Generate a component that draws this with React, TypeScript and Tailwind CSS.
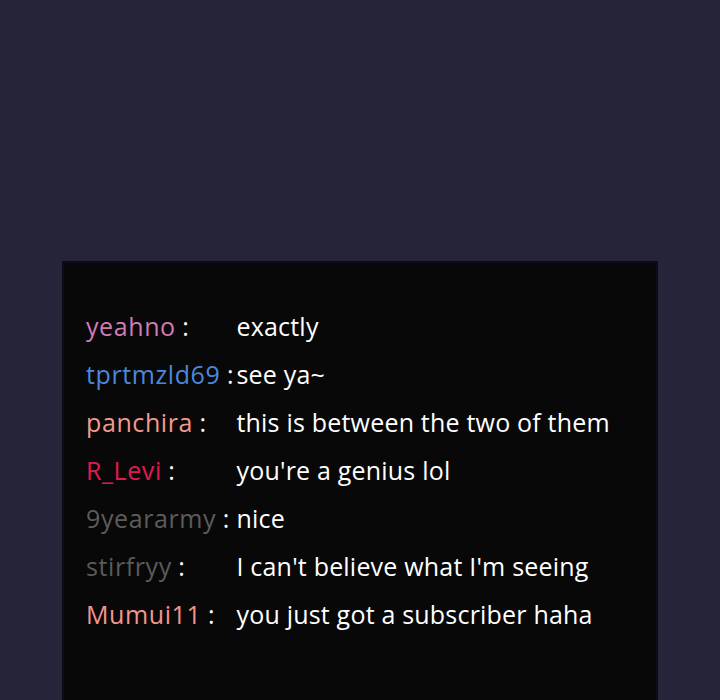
const messages = [
  { name: "yeahno", color: "text-[#d27bb4]", text: "exactly" },
  { name: "tprtmzld69", color: "text-[#4a88de]", text: "see ya~" },
  { name: "panchira", color: "text-[#f29a8e]", text: "this is between the two of them" },
  { name: "R_Levi", color: "text-[#e3184f]", text: "you're a genius lol" },
  { name: "9yeararmy", color: "text-[#5c5c5c]", text: "nice" },
  { name: "stirfryy", color: "text-[#5a5a5a]", text: "I can't believe what I'm seeing" },
  { name: "Mumui11", color: "text-[#f3958c]", text: "you just got a subscriber haha" },
];

export default function App() {
  return (
    <div className="min-h-[700px] bg-[#252438] pt-[261px] pl-[62px] pr-[62px] font-['Open_Sans',sans-serif]">
      <div className="w-[596px] h-[439px] bg-[#080808] border-2 border-[#0c0b16] border-b-0 pt-[39px] pl-[22px]">
        <div className="grid grid-cols-[auto_1fr] gap-x-[3px] text-[25px] leading-[48px]">
          {messages.map((m) => (
            <div key={m.name} className="contents">
              <div className="whitespace-nowrap">
                <span className={`${m.color} tracking-[0.6px]`}>{m.name}</span>
                <span className="text-white"> :</span>
              </div>
              <div className="text-white whitespace-nowrap tracking-[0.2px]">{m.text}</div>
            </div>
          ))}
        </div>
      </div>
    </div>
  );
}
